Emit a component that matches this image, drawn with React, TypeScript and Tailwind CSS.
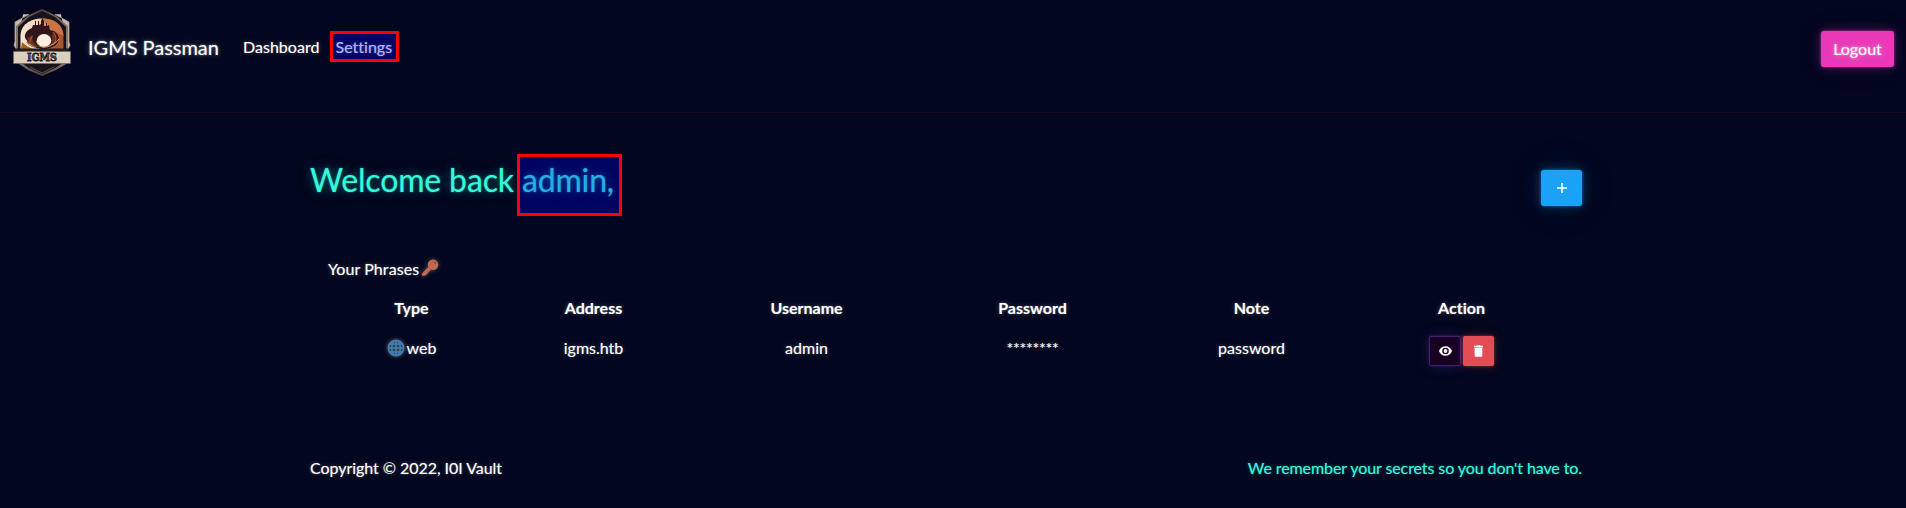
import React from "react";

const glow = "[text-shadow:0_0_2px_rgba(255,255,255,0.55),0_0_6px_rgba(255,255,255,0.3),0_0_24px_rgba(255,255,255,0.2)]";
const softGlow = "[text-shadow:0_0_1px_rgba(255,255,255,0.4),0_0_4px_rgba(255,255,255,0.3)]";
const tealGlow = "[text-shadow:0_0_2px_rgba(50,251,226,0.5),0_0_10px_rgba(50,251,226,0.35),0_0_20px_rgba(50,251,226,0.15)]";

function Logo() {
  return (
    <svg viewBox="0 0 58 69" className="block h-[69px] w-[58px]" aria-label="IGMS">
      <defs>
        <linearGradient id="rim" x1="0" x2="1">
          <stop offset="0" stopColor="#81756b" />
          <stop offset="0.5" stopColor="#4a4340" />
          <stop offset="1" stopColor="#8c7667" />
        </linearGradient>
        <linearGradient id="sky" x1="0" x2="1">
          <stop offset="0" stopColor="#f8e6d2" />
          <stop offset="0.42" stopColor="#f0d3b6" />
          <stop offset="0.6" stopColor="#d98e5c" />
          <stop offset="1" stopColor="#a04d24" />
        </linearGradient>
      </defs>
      <path d="M10 6.500h6L2 14v20l-1 3 2 4M48 6.500h-6L56 14v20l1 3-2 4" fill="#c9bcae" stroke="#a69a8e" strokeWidth=".8" />
      <path d="M29 1 43 7.500l12 10.500V55L43 62l-14 6L15 62 3 54V18L15 7.500Z" fill="url(#rim)" />
      <path d="M29 3 42 9l11 10v34L42 60l-13 6L16 60 5 52V19L16 9Z" fill="#17131a" />
      <path d="M7.500 41V28C7.500 17 17 10.500 29 10.500S50.500 17 50.500 28v13Z" fill="url(#sky)" />
      <path d="M30 10.700c12-.5 20 6.500 20.500 17.300l-7-4-7-6-5-3Z" fill="#c97543" />
      <path d="M12 27c1-4 4-6 7-7l1-3h2v-4h1v4h2v-4h1v4l2-1v-3l1.500-3L31 13v5h2v-3h1v3l2-1 1 5 4 1c4 3 6 6 4 11-2 5-7 7-14 7s-14-2-16-7c-1-2-4-4-3-7Z" fill="#32161a" />
      <path d="M15 29c3 1 2-1 5-2-1 5 0 9 6 12-5 1-11-1-12-5ZM40 26c5 5 2 12-5 13 4-3 6-8 3-12Z" fill="#6b311e" />
      <path d="M18 37c-3-3 0-6 1-9M40 24c4 4 4 9 0 13" fill="none" stroke="#a0552b" strokeWidth="1.200" />
      <path d="M9 34c3 3 6 5 11 7H8ZM50 32c-4 4-9 6-15 9h15Z" fill="#a9572d" />
      <path d="M13 34c3 3 7 4 10 6M46 31c-3 4-7 6-12 8" fill="none" stroke="#e0a073" strokeWidth="1" />
      <ellipse cx="31" cy="32.500" rx="7.300" ry="6.500" fill="#fbefe0" />
      <path d="M23.500 33c1 5 5 7 10 6" fill="none" stroke="#d59a70" />
      <rect x="2" y="40.500" width="54" height="3.500" fill="#211b1d" />
      <path d="M.5 43.500h57v12H.5Z" fill="#dccfbf" stroke="#75685e" strokeWidth=".7" />
      <text x="29" y="53.300" textAnchor="middle" textLength="30" lengthAdjust="spacingAndGlyphs" className="font-['DejaVu_Serif',serif] text-[10.500px] font-bold" fill="#171417" stroke="#171417" strokeWidth=".8">IGMS</text>
      <path d="M17 59l12 6L41 59" fill="none" stroke="#695046" strokeWidth="1" />
    </svg>
  );
}

function KeyIcon() {
  return (
    <svg viewBox="0 0 18 18" className="absolute -top-[1px] left-0 h-[18px] w-[18px] drop-shadow-[0_0_2px_rgba(255,255,255,0.35)]">
      <path d="M2.500 15.300 9.300 8.500" stroke="#c1694f" strokeWidth="3.400" strokeLinecap="round" />
      <path d="M3.500 15.700h1.200l.2-1.600 1.600-.2.300-1.500 2.500-1.700" stroke="#c1694f" strokeWidth="1.200" fill="none" />
      <circle cx="12" cy="5.800" r="5.200" fill="#c1694f" />
      <circle cx="14.200" cy="3.800" r="1" fill="#7d4a42" />
    </svg>
  );
}

function GlobeIcon() {
  return (
    <svg viewBox="0 0 18 18" className="h-[18px] w-[18px] drop-shadow-[0_0_2px_rgba(255,255,255,0.4)]">
      <circle cx="9" cy="9" r="8" fill="#343f50" />
      <g fill="none" stroke="#4183b5" strokeWidth="1.500">
        <circle cx="9" cy="9" r="7.600" />
        <ellipse cx="9" cy="9" rx="4.300" ry="7.600" />
        <path d="M9 1v16M1 9h16M2.500 5h13M2.500 13h13" />
      </g>
    </svg>
  );
}

const columns = ["Type", "Address", "Username", "Password", "Note", "Action"];
const rowGrid = "grid grid-cols-[168px_196px_230px_222px_216px_204px] text-center";

export default function App() {
  return (
    <div className={`h-[508px] w-full overflow-hidden bg-[#02061e] font-['Lato',sans-serif] text-base leading-6 text-white [font-variant-ligatures:none] ${softGlow}`}>
      <header className="flex h-[113px] items-start border-b border-[#180722] pl-[13px] pr-3">
        <div className="mt-2"><Logo /></div>
        <a className={`ml-[17px] mt-8 text-[20px] leading-[30px] tracking-[-0.03px] ${glow}`}>IGMS Passman</a>
        <nav className="ml-6 flex items-start">
          <a className="mt-[35px] tracking-[0.05px]">Dashboard</a>
          <a className="relative ml-4 mt-[35px]">
            Settings
            <span className="absolute -left-[6px] -top-1 h-[31px] w-[69px] border-[3px] border-[#fb0007] bg-[rgba(0,0,255,0.3)]" />
          </a>
        </nav>
        <button className={`ml-auto mt-[31px] h-9 w-[73px] rounded-[3px] bg-[#ea39b8] shadow-[0_0_3px_rgba(234,57,184,0.7),0_0_12px_rgba(234,57,184,0.3),0_0_30px_rgba(234,57,184,0.08)] ${glow}`}>Logout</button>
      </header>
      <div className="h-[6px] border-b border-[#09051f]" />

      <main className="ml-[310px] w-[1272px]">
        <div className="flex h-[137px] items-start justify-between">
          <h1 className={`relative mt-[42px] text-[32px] leading-[38px] tracking-[-0.15px] text-[#34fadb] ${tealGlow}`}>
            Welcome back admin,
            <span className="absolute left-[207px] top-[-7px] h-[62px] w-[105px] border-[3px] border-[#fb0007] bg-[rgba(0,0,255,0.3)]" />
          </h1>
          <button aria-label="Add" className="mt-[51px] flex h-9 w-[41px] items-center justify-center rounded-[3px] bg-[#1ba2f6] shadow-[0_0_3px_rgba(27,162,246,0.6),0_0_12px_rgba(27,162,246,0.35),0_0_40px_rgba(27,162,246,0.1)]">
            <svg viewBox="0 0 10 10" className="h-[10px] w-[10px]"><path d="M5 0v10M0 5h10" stroke="white" strokeWidth="1.600" /></svg>
          </button>
        </div>

        <section className="h-[200px] pl-[17px]">
          <div className="flex h-10 pl-[1px] pt-px">
            <span className="tracking-[0.08px]">Your Phrases</span>
            <span className="relative ml-[2px] mt-[3px] h-[18px] w-[18px]"><KeyIcon /></span>
          </div>
          <div className={`${rowGrid} ml-[0.5px] h-10 font-bold`}>
            {columns.map((name) => <div key={name}>{name}</div>)}
          </div>
          <div className={`${rowGrid} ml-[0.5px] h-10`}>
            <div className="flex h-6 items-center justify-center gap-[2px]"><GlobeIcon /><span>web</span></div>
            <div>igms.htb</div>
            <div>admin</div>
            <div className="tracking-[-0.3px]">********</div>
            <div>password</div>
            <div className="flex items-start justify-center gap-[2px]">
              <button aria-label="View" className="flex h-[30px] w-[32px] items-center justify-center rounded-[2px] border border-[#40206f] bg-[#170022] shadow-[0_0_3px_rgba(111,66,193,0.4),0_0_14px_rgba(111,66,193,0.25)]">
                <svg viewBox="1 4 22 16" className="h-[10px] w-[13px]" fill="white"><path d="M12 4C7 4 2.700 7.300 1 12c1.700 4.700 6 8 11 8s9.300-3.300 11-8c-1.700-4.700-6-8-11-8Zm0 13.500a5.500 5.500 0 1 1 0-11 5.500 5.500 0 0 1 0 11Zm0-2.300a3.200 3.200 0 1 0 0-6.400 3.200 3.200 0 0 0 0 6.400Z" /></svg>
              </button>
              <button aria-label="Delete" className="flex h-[30px] w-[31px] items-center justify-center rounded-[2px] bg-[#e44c55] shadow-[0_0_3px_rgba(228,76,85,0.6),0_0_12px_rgba(228,76,85,0.25)]">
                <svg viewBox="5 3 14 18" className="h-[12px] w-[9px]" fill="white"><path d="M6 19c0 1.100.9 2 2 2h8c1.100 0 2-.9 2-2V7H6v12ZM19 4h-3.500l-1-1h-5l-1 1H5v2h14V4Z" /></svg>
              </button>
            </div>
          </div>
        </section>

        <footer className="flex justify-between">
          <span className="tracking-[-0.05px]">Copyright © 2022, I0I Vault</span>
          <span className="tracking-[-0.09px] text-[#34fadb] [text-shadow:0_0_1px_rgba(50,251,226,0.4),0_0_4px_rgba(50,251,226,0.3)]">We remember your secrets so you don't have to.</span>
        </footer>
      </main>
    </div>
  );
}
